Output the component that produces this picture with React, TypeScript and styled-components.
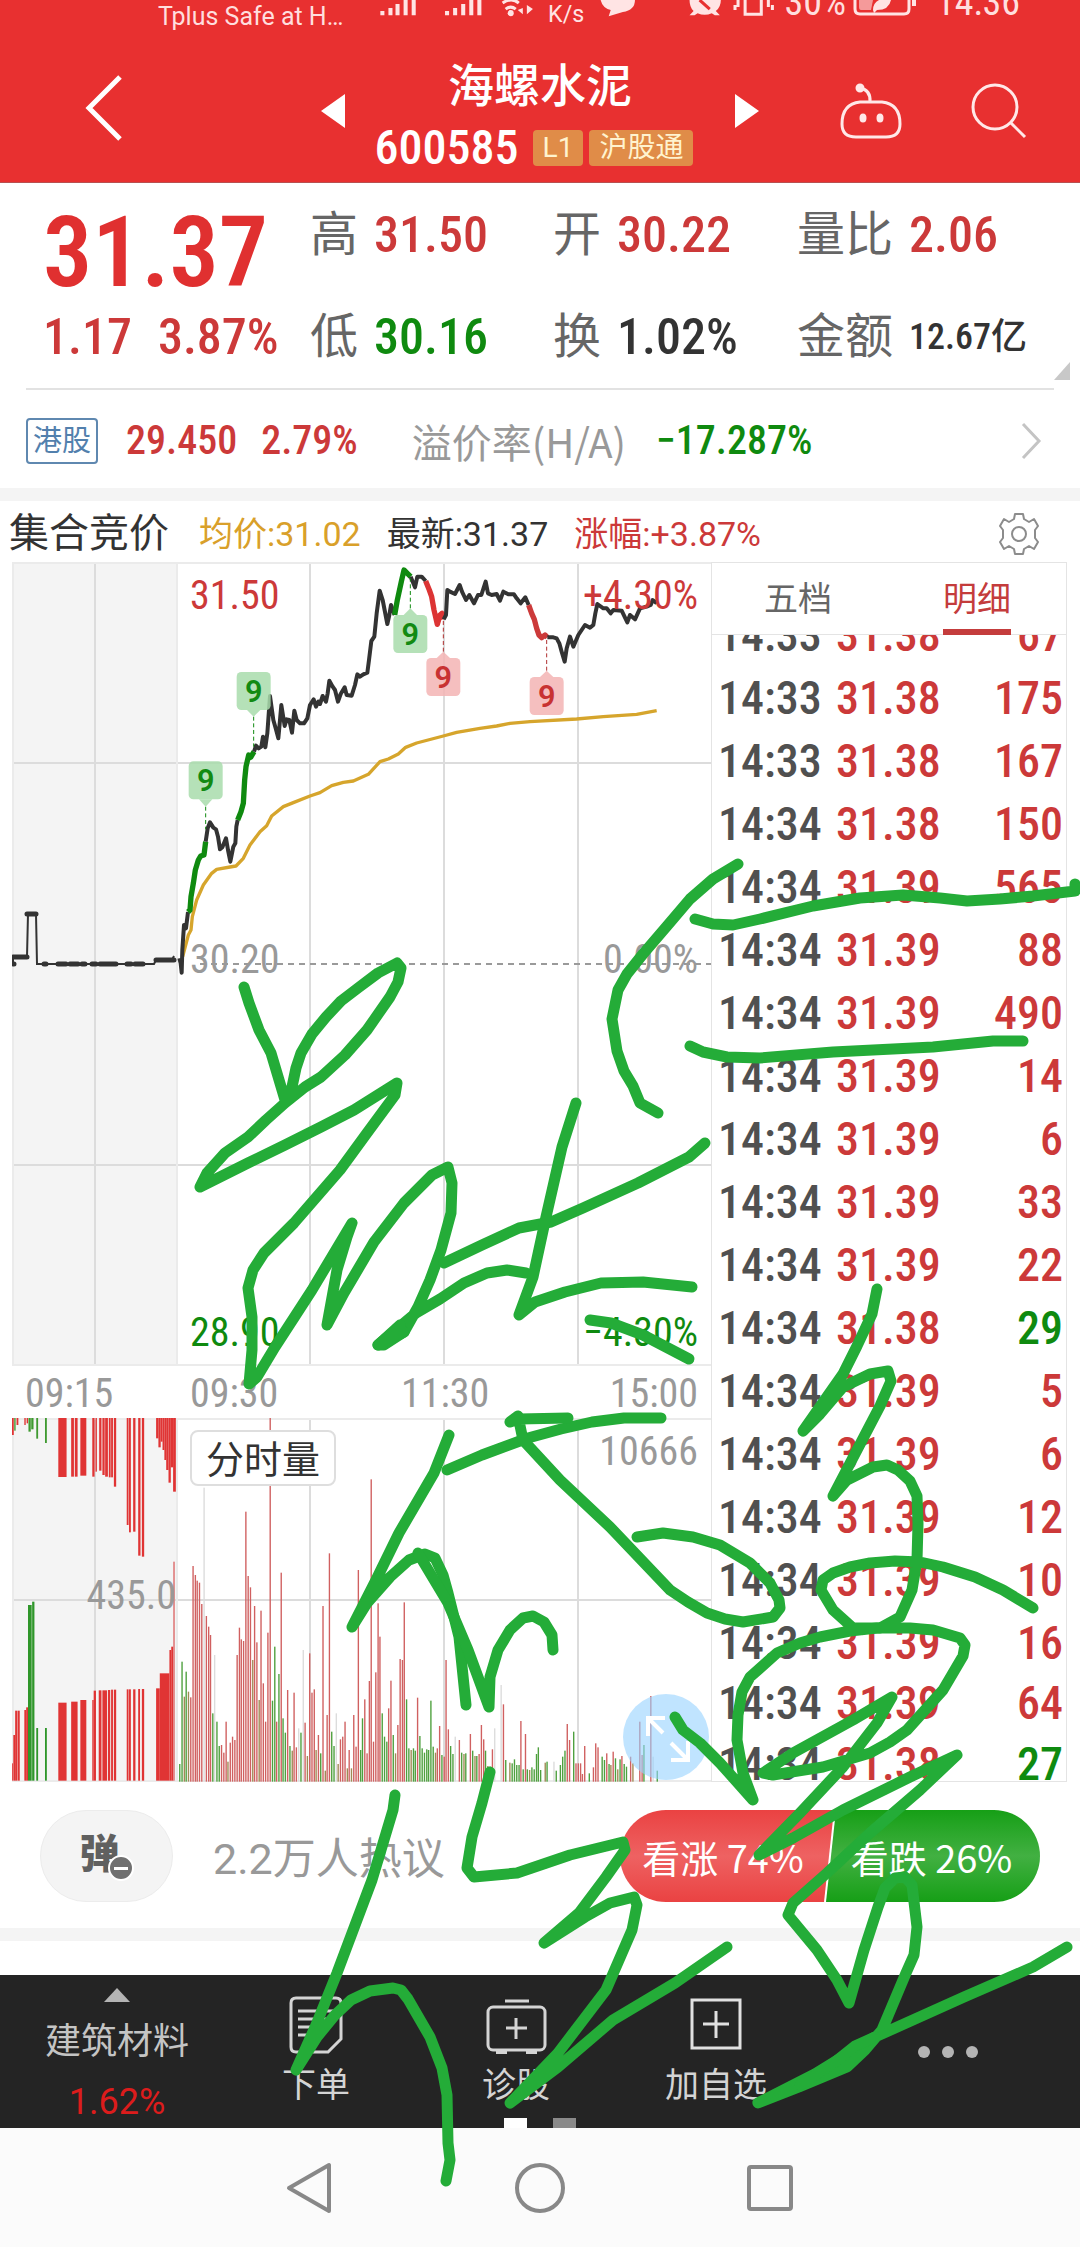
import React from "react";
import styled, { createGlobalStyle } from "styled-components";

const RED = "#cc3939";
const GREEN = "#0f8a0f";
const INK = "#333333";
const MUTED = "#999999";
const LINE = "#dcdcdc";
const NARROW = `"Roboto Condensed", Roboto, "Noto Sans CJK SC", sans-serif`;

const GlobalStyle = createGlobalStyle`
  * { box-sizing: border-box; }
  body {
    margin: 0;
    background: #ffffff;
    font-family: Roboto, "Noto Sans CJK SC", sans-serif;
    color: ${INK};
  }
  button {
    border: 0;
    padding: 0;
    margin: 0;
    background: none;
    font: inherit;
    color: inherit;
    cursor: pointer;
  }
  h1, p, dl, dd, dt { margin: 0; font-weight: 400; }
  svg { display: block; }
`;

const Page = styled.div`
  position: relative;
  width: 100%;
  overflow: hidden;
`;

/* ---------- header ---------- */

const Header = styled.header`
  height: 183px;
  background: #e83030;
  color: #fff;
  border-bottom: 1px solid #b85050;
`;

const StatusBar = styled.div`
  display: flex;
  align-items: flex-start;
  height: 40px;
  padding: 0 60px 0 158px;
  overflow: hidden;
  color: #ffdede;
`;

const Carrier = styled.span`
  width: 188px;
  padding-top: 3px;
  font-size: 25px;
  line-height: 28px;
  white-space: nowrap;
`;

const StatusIcons = styled.svg`
  flex: 1;
  min-width: 0;
  height: 40px;
`;

const StatusText = styled.span`
  margin-top: -18px;
  font-family: ${NARROW};
  font-size: 38px;
  line-height: 40px;
`;

const BatteryIcon = styled.svg`
  width: 84px;
  height: 20px;
  margin-left: 6px;
`;

const TitleBar = styled.div`
  display: grid;
  grid-template-columns: 320px 1fr 320px;
  align-items: center;
  height: 142px;
`;

const IconButton = styled.button`
  display: inline-flex;
  align-items: center;
  justify-content: center;
`;

const BackArea = styled.div`
  padding: 0 0 2px 84px;
`;

const Identity = styled.div`
  display: flex;
  align-items: center;
  justify-content: space-between;
`;

const TitleBlock = styled.div`
  display: flex;
  flex-direction: column;
  align-items: center;
  padding-top: 14px;
`;

const StockName = styled.h1`
  font-size: 46px;
  line-height: 60px;
  font-weight: 500;
`;

const CodeLine = styled.div`
  display: flex;
  align-items: center;
  gap: 6px;
  height: 64px;
  padding-right: 12px;
`;

const Code = styled.span`
  margin-right: 8px;
  font-family: ${NARROW};
  font-size: 48px;
  line-height: 50px;
  font-weight: 500;
`;

const Tag = styled.span`
  padding: 0 10px;
  border-radius: 4px;
  background: #e08c48;
  color: #fff3cf;
  font-size: 28px;
  line-height: 36px;
`;

const Tools = styled.div`
  display: flex;
  justify-content: flex-end;
  gap: 68px;
  padding-right: 52px;
`;

/* ---------- quote ---------- */

const Quote = styled.section`
  position: relative;
  display: grid;
  grid-template-columns: 267px 243px 244px 1fr;
  grid-template-rows: 104px 100px;
  align-items: center;
  height: 207px;
  margin: 0 26px;
  padding-left: 17px;
  border-bottom: 2px solid #e2e2e2;
  font-family: ${NARROW};
`;

const Price = styled.p`
  padding-top: 36px;
  color: #e03030;
  font-size: 98px;
  line-height: 104px;
  font-weight: 600;
`;

const Change = styled.p<{ $color: string }>`
  display: flex;
  gap: 26px;
  color: ${(p) => p.$color};
  font-size: 50px;
  line-height: 54px;
  font-weight: 500;
`;

const Stat = styled.dl`
  display: flex;
  align-items: center;
  gap: 16px;
  white-space: nowrap;
`;

const StatName = styled.dt`
  color: #666;
  font-size: 48px;
  line-height: 60px;
`;

const StatValue = styled.dd<{ $color: string; $small?: boolean }>`
  color: ${(p) => p.$color};
  font-size: ${(p) => (p.$small ? 36 : 50)}px;
  line-height: 54px;
  font-weight: 500;
`;

const Corner = styled.span`
  position: absolute;
  right: -16px;
  bottom: 8px;
  border-left: 16px solid transparent;
  border-bottom: 18px solid #c8c8c8;
`;

const HkRow = styled.section`
  display: flex;
  align-items: center;
  height: 98px;
  padding: 4px 38px 0 26px;
  font-family: ${NARROW};
  font-size: 40px;
  line-height: 44px;
  font-weight: 500;
  color: ${RED};
`;

const HkTag = styled.span`
  margin-right: 28px;
  padding: 0 5px;
  border: 2px solid #5f88b0;
  border-radius: 4px;
  color: #5280ad;
  font-size: 29px;
  font-weight: 400;
  line-height: 42px;
`;

const HkValue = styled.span`
  margin-right: 24px;
`;

const HkName = styled.span`
  margin-left: 30px;
  color: ${MUTED};
  font-family: "Noto Sans CJK SC", sans-serif;
  font-size: 40px;
  font-weight: 400;
`;

const HkPremium = styled.span`
  flex: 1;
  margin-left: 30px;
  color: ${GREEN};
`;

const Band = styled.div`
  height: 13px;
  background: #f4f4f4;
`;

/* ---------- chart ---------- */

const Legend = styled.div`
  display: flex;
  align-items: center;
  height: 61px;
  padding: 4px 38px 0 9px;
  font-size: 34px;
  line-height: 44px;
  white-space: nowrap;
`;

const Session = styled.span`
  margin-right: 30px;
  font-size: 40px;
`;

const LegendItem = styled.span<{ $color: string }>`
  margin-right: 26px;
  color: ${(p) => p.$color};
`;

const LegendEnd = styled.div`
  flex: 1;
  display: flex;
  justify-content: flex-end;
`;

const Board = styled.section`
  display: grid;
  grid-template-columns: 699fr 356fr;
  height: 1220px;
  margin: 0 13px 0 12px;
`;

const Plots = styled.div`
  display: flex;
  flex-direction: column;
`;

const Plot = styled.div<{ $height: number }>`
  position: relative;
  height: ${(p) => p.$height}px;
`;

const PlotSvg = styled.svg`
  width: 100%;
  height: 100%;
`;

const PlotLabel = styled.span<{ $top: number; $color: string; $side: "left" | "right" | "auction" }>`
  position: absolute;
  top: ${(p) => p.$top}px;
  ${(p) => (p.$side === "left" ? "left: 178px;" : p.$side === "right" ? "right: 13px;" : "right: 535px;")}
  color: ${(p) => p.$color};
  font-family: ${NARROW};
  font-size: 40px;
  line-height: 40px;
`;

const TimeAxis = styled.div`
  display: grid;
  grid-template-columns: 178px 211px 1fr auto;
  align-items: center;
  height: 52px;
  padding: 3px 13px 0 0;
  color: ${MUTED};
  font-family: ${NARROW};
  font-size: 40px;
  line-height: 40px;
`;

const AuctionTime = styled.span`
  padding-left: 13px;
`;

const VolumePicker = styled.button`
  position: absolute;
  top: 12px;
  left: 178px;
  height: 56px;
  padding: 4px 14px 0;
  border: 2px solid #dedede;
  border-radius: 8px;
  background: #fff;
  font-size: 38px;
  line-height: 48px;
`;

const ExpandButton = styled.button`
  position: absolute;
  right: 2px;
  bottom: 2px;
  width: 86px;
  height: 86px;
  border-radius: 50%;
  background: rgba(150, 210, 255, 0.6);
`;

const Side = styled.div`
  display: flex;
  flex-direction: column;
  min-height: 0;
  border: 1px solid #e4e4e4;
`;

const Tabs = styled.div`
  display: flex;
  justify-content: space-between;
  height: 72px;
  padding: 0 55px 0 52px;
  border-bottom: 1px solid #e4e4e4;
`;

const Tab = styled.button<{ $active?: boolean }>`
  height: 72px;
  border-bottom: 6px solid ${(p) => (p.$active ? "#c43c3c" : "transparent")};
  color: ${(p) => (p.$active ? "#c43c3c" : "#666")};
  font-size: 34px;
`;

const TradeScroll = styled.div`
  flex: 1;
  min-height: 0;
  overflow: hidden;
`;

const Trades = styled.table`
  width: 100%;
  margin-top: -32px;
  border-collapse: collapse;
  font-family: ${NARROW};
  font-size: 46px;
  line-height: 44px;
  font-weight: 500;
`;

const TradeRow = styled.tr<{ $tight?: boolean }>`
  height: ${(p) => (p.$tight ? 58 : 63)}px;
`;

const TradeTime = styled.td`
  width: 124px;
  padding: 0 0 0 6px;
  color: #505050;
`;

const TradePrice = styled.td`
  padding: 0;
  color: ${RED};
`;

const TradeSize = styled.td<{ $down?: boolean }>`
  padding: 0 3px 0 0;
  text-align: right;
  color: ${(p) => (p.$down ? GREEN : RED)};
`;

/* ---------- opinions ---------- */

const Opinions = styled.section`
  display: flex;
  align-items: center;
  height: 146px;
  padding: 2px 40px 0;
`;

const BulletButton = styled.button`
  position: relative;
  width: 133px;
  height: 92px;
  padding: 0 14px 10px 0;
  border: 1px solid #ececec;
  border-radius: 46px;
  background: #f4f4f4;
  color: #606060;
  font-size: 40px;
  font-weight: 900;
`;

const MinusDot = styled.span`
  position: absolute;
  left: 67px;
  top: 44px;
  display: flex;
  align-items: center;
  justify-content: center;
  width: 26px;
  height: 26px;
  border: 2px solid #fff;
  border-radius: 50%;
  background: #707070;

  &::after {
    content: "";
    width: 14px;
    height: 3px;
    background: #fff;
  }
`;

const Heat = styled.p`
  flex: 1;
  margin-left: 40px;
  padding-top: 6px;
  color: ${MUTED};
  font-size: 43px;
  line-height: 50px;
`;

const Votes = styled.div`
  display: grid;
  grid-template-columns: 1fr 1fr;
  width: 420px;
  height: 92px;
  border-radius: 46px;
  overflow: hidden;
`;

const Vote = styled.button<{ $up?: boolean }>`
  margin-left: ${(p) => (p.$up ? 0 : -7)}px;
  margin-right: ${(p) => (p.$up ? -4 : 0)}px;
  padding-right: ${(p) => (p.$up ? 8 : 0)}px;
  background: ${(p) =>
    p.$up
      ? "linear-gradient(#ea4242, #ee6262 50%, #ea4242)"
      : "linear-gradient(#169f16, #42b042 50%, #169f16)"};
  clip-path: ${(p) =>
    p.$up
      ? "polygon(0 0, 100% 0, calc(100% - 10px) 100%, 0 100%)"
      : "polygon(13px 0, 100% 0, 100% 100%, 3px 100%)"};
  color: #fff;
  font-family: "Noto Sans CJK SC", sans-serif;
  font-size: 38px;
`;

const Spacer = styled.div`
  height: 34px;
`;

/* ---------- bottom bars ---------- */

const ActionBar = styled.nav`
  position: relative;
  display: grid;
  grid-template-columns: 216px 200px 200px 200px 1fr;
  height: 153px;
  background: #242424;
  color: #d4d4d4;
`;

const Action = styled.button`
  display: flex;
  flex-direction: column;
  align-items: center;
  gap: 3px;
  padding-top: 20px;
  font-size: 34px;
  line-height: 50px;
`;

const ActionIcon = styled.svg`
  width: 62px;
  height: 62px;
`;

const Sector = styled.button`
  display: flex;
  flex-direction: column;
  align-items: center;
  padding-top: 13px;
  padding-left: 18px;
  color: #c4c4c4;
  font-size: 36px;
  line-height: 60px;
`;

const UpMark = styled.span`
  margin-bottom: 10px;
  border-left: 13px solid transparent;
  border-right: 13px solid transparent;
  border-bottom: 14px solid #b4b4b4;
`;

const SectorChange = styled.span`
  color: #dc1c1c;
`;

const More = styled.button`
  display: flex;
  align-items: center;
  justify-content: center;
  gap: 12px;
  padding-bottom: 4px;
`;

const Dot = styled.span`
  width: 12px;
  height: 12px;
  border-radius: 50%;
  background: #b4b4b4;
`;

const Pager = styled.div`
  position: absolute;
  left: 0;
  right: 0;
  bottom: 0;
  display: flex;
  justify-content: center;
  gap: 26px;
`;

const PagerMark = styled.span<{ $on?: boolean }>`
  width: 23px;
  height: 10px;
  background: ${(p) => (p.$on ? "#fff" : "#8a8a8a")};
`;

const SystemBar = styled.nav`
  display: flex;
  justify-content: center;
  align-items: center;
  gap: 170px;
  height: 119px;
  background: #fbfbfb;
`;

const Ink = styled.svg`
  position: absolute;
  inset: 0;
  width: 100%;
  height: 100%;
  pointer-events: none;
`;

/* ---------- data ---------- */

type Trade = { time: string; price: string; size: number; down?: boolean; tight?: boolean };

const trades: Trade[] = [
  { time: "14:33", price: "31.38", size: 67 },
  { time: "14:33", price: "31.38", size: 175 },
  { time: "14:33", price: "31.38", size: 167 },
  { time: "14:34", price: "31.38", size: 150 },
  { time: "14:34", price: "31.39", size: 565 },
  { time: "14:34", price: "31.39", size: 88 },
  { time: "14:34", price: "31.39", size: 490 },
  { time: "14:34", price: "31.39", size: 14 },
  { time: "14:34", price: "31.39", size: 6 },
  { time: "14:34", price: "31.39", size: 33 },
  { time: "14:34", price: "31.39", size: 22 },
  { time: "14:34", price: "31.38", size: 29, down: true },
  { time: "14:34", price: "31.39", size: 5 },
  { time: "14:34", price: "31.39", size: 6 },
  { time: "14:34", price: "31.39", size: 12 },
  { time: "14:34", price: "31.39", size: 10 },
  { time: "14:34", price: "31.39", size: 16 },
  { time: "14:34", price: "31.39", size: 64, tight: true },
  { time: "14:34", price: "31.38", size: 27, down: true },
];

const priceRuns: { color: string; points: string }[] = [
  { color: INK, points: "58,1195 62,1210 65,1238 67,1170 72,1095 78,1105 84,1056" },
  { color: GREEN, points: "84,1056 90,1050 93,1010 100,970 106,930 115,900 122,888 132,885 137,845" },
  { color: INK, points: "137,845 143,805 150,787 160,803 168,808 174,830 180,868 187,862 198,835 204,870 211,905 220,860 226,850 229,800 233,780" },
  { color: GREEN, points: "233,780 243,755 250,730 254,660 258,620 266,585 272,592 282,575" },
  { color: INK, points: "282,575 288,557 296,565 304,560 309,530 316,562 322,520 330,408 340,480 347,505 355,535 360,480 364,435 374,498 380,478 388,480 396,518 403,452 410,480 420,490 432,490 442,475 450,435 461,418 468,440 475,425 480,432 488,408 498,425 503,400 508,362 518,380 525,390 534,425 542,402 554,382 560,405 575,407 585,375 592,343 600,350 610,343 622,338 627,300 634,243 643,230 650,160 659,92 668,120 682,192 688,165 693,135 704,165" },
  { color: GREEN, points: "704,165 712,120 724,65 732,30 742,40 752,50" },
  { color: INK, points: "752,50 765,82 772,50 785,50 797,63" },
  { color: "#dc3434", points: "797,63 808,90 815,110 822,150 832,193 840,165 846,160 851,178" },
  { color: INK, points: "851,178 858,165 862,90 870,95 885,102 899,75 906,95 918,120 928,105 942,130 954,105 964,105 977,65 984,100 995,105 1010,102 1020,122 1030,95 1045,103 1062,103 1070,115 1082,130 1096,112 1106,135" },
  { color: "#cc3a3a", points: "1106,135 1115,160 1123,178 1130,205 1137,225 1145,233 1155,225 1162,232" },
  { color: INK, points: "1162,232 1180,232 1190,235 1198,250 1205,275 1214,305 1220,265 1230,230 1240,260 1255,225 1275,195 1290,203 1300,195 1306,160 1312,132 1330,145 1340,145 1352,160 1360,150 1385,152 1402,187 1410,165 1425,178 1440,145 1460,140 1472,135 1478,120 1490,130" },
];

const averageLine =
  "68,1190 85,1125 93,1110 97,1070 110,1020 130,975 155,940 170,928 210,921 228,918 250,895 270,855 300,815 320,797 335,768 370,740 400,728 450,708 480,698 515,677 550,667 580,663 625,643 660,605 685,597 715,582 737,562 770,549 850,528 890,517 960,505 1010,498 1050,490 1110,485 1250,477 1330,470 1430,463 1490,452";

const signals = [
  { x: 137, top: 604, tip: 740, end: 808, up: false, green: true },
  { x: 281, top: 336, tip: 470, end: 560, up: false, green: true },
  { x: 751, top: 165, tip: 145, end: 55, up: true, green: true },
  { x: 850, top: 294, tip: 275, end: 180, up: true, green: false },
  { x: 1160, top: 351, tip: 332, end: 240, up: true, green: false },
];

// Each bar is "x top tone": r rising, g falling, o mixed, w faint.
const volumeBars =
  "391 1212 g;396 905 g;401 1010 o;405 935 g;410 995 o;415 1012 r;420 618 r;425 645 r;429 662 r;434 668 r;439 732 r;444 383 w;449 768 r;454 800 r;458 825 r;463 1060 g;467 885 w;472 1085 g;477 1158 g;482 1155 r;487 1178 r;492 1085 r;496 1205 o;501 1148 r;506 1130 r;511 1140 r;516 885 r;521 803 r;525 838 r;530 843 r;535 455 r;540 648 r;545 682 r;550 900 o;554 738 r;559 847 r;564 1020 o;568 752 r;573 970 r;578 1085 r;583 818 r;588 174 r;593 1022 g;598 860 g;602 1085 r;607 942 g;612 638 r;616 1075 g;621 1118 g;626 990 r;631 1158 g;636 1172 o;640 998 r;645 1162 r;650 1105 w;655 1118 g;660 870 w;664 1088 r;669 1188 o;674 880 r;679 998 r;684 988 r;688 1170 o;693 1125 r;698 1180 g;703 738 r;708 1232 o;712 1065 r;717 580 r;722 1115 g;727 1158 g;732 1060 w;736 1212 o;741 1138 r;746 1130 r;751 1085 r;756 1225 o;760 1170 r;765 1225 o;770 1065 r;775 1160 r;780 630 r;785 1170 g;789 1075 g;794 1018 r;799 1180 r;804 963 r;808 358 r;813 1145 r;818 937 r;823 730 r;827 830 r;832 1060 g;837 1130 g;842 1145 g;846 1045 r;851 962 r;856 1125 g;861 1180 o;866 1095 r;871 897 r;876 900 r;880 727 r;885 1018 g;890 1165 g;895 1170 o;900 1165 g;904 1172 g;909 1013 r;914 1128 g;919 1165 g;924 1178 g;929 1168 g;933 1170 g;938 1022 g;943 1160 g;948 1178 o;952 1165 r;957 1098 r;962 1185 g;967 1190 r;971 900 r;976 1108 r;981 1158 g;986 1182 g;991 1130 w;1000 1140 r;1005 1178 g;1010 1182 o;1014 1180 g;1024 1122 r;1029 1172 g;1034 1188 o;1038 1188 g;1043 1182 r;1048 1095 r;1053 1138 r;1057 1172 g;1062 1218 o;1067 1220 g;1072 1168 r;1077 1105 w;1091 975 w;1096 1033 r;1101 1200 g;1110 1208 o;1115 1210 g;1120 1198 g;1125 1215 g;1130 1215 g;1134 1083 r;1139 1228 g;1144 1122 r;1148 1228 g;1153 1230 o;1158 1222 g;1163 1228 g;1168 1182 g;1172 1162 g;1177 1230 g;1187 1208 o;1191 1205 g;1206 1205 w;1211 1232 g;1220 1215 g;1225 1190 g;1230 1172 g;1235 1092 r;1240 1140 r;1249 1115 g;1254 1210 r;1259 1210 r;1264 1210 r;1268 1242 r;1273 1158 r;1283 1240 g;1292 1222 r;1297 1150 r;1302 1162 r;1311 1190 g;1316 1200 g;1321 1180 r;1326 1212 g;1330 1215 o;1335 1175 r;1340 1195 g;1345 1228 o;1350 1198 g;1354 1188 r;1359 1212 g;1364 1220 g;1373 1190 r;1378 1210 o;1393 1085 r;1398 1185 r;1402 1155 g;1417 1008 r;1422 1190 w;1431 1232 g"
    .split(";")
    .map((entry) => {
      const [x, top, tone] = entry.split(" ");
      return { x: Number(x), top: Number(top), tone };
    });

const tones: Record<string, string> = { r: "#d06060", g: "#4ea03e", o: "#a08a55", w: "#dcdcdc" };

// Auction bars: [x, width, end, green]; the first list hangs, the second stands.
const hanging: [number, number, number, number][] = [
  [26, 5, 225, 0], [31, 4, 212, 1], [36, 5, 195, 0], [53, 4, 195, 0], [58, 4, 190, 0], [62, 6, 215, 1], [68, 6, 208, 1],
  [79, 5, 236, 1], [98, 5, 249, 1], [127, 19, 351, 0], [155, 7, 350, 0], [163, 7, 350, 0], [175, 14, 347, 0], [201, 6, 350, 0],
  [208, 4, 335, 0], [216, 6, 332, 0], [223, 6, 345, 0], [229, 7, 350, 0], [237, 5, 352, 0], [242, 5, 352, 0], [248, 6, 380, 0],
  [276, 5, 495, 0], [281, 5, 517, 0], [290, 6, 515, 0], [301, 6, 587, 0], [309, 6, 590, 0], [340, 6, 235, 0], [345, 6, 262, 0],
  [350, 5, 245, 0], [354, 5, 270, 0], [358, 5, 300, 0], [362, 6, 330, 0], [367, 6, 368, 0], [372, 6, 322, 0], [377, 7, 395, 0],
];

const standing: [number, number, number, number][] = [
  [26, 3, 1210, 0], [29, 5, 1125, 0], [33, 5, 1052, 0], [38, 6, 1052, 0], [53, 5, 1050, 0], [57, 5, 1042, 0], [61, 9, 735, 1],
  [70, 6, 725, 1], [79, 5, 1104, 1], [98, 5, 1104, 1], [127, 19, 1028, 0], [155, 15, 1025, 0], [175, 14, 1020, 0], [201, 4, 1020, 0],
  [204, 6, 992, 0], [215, 7, 991, 0], [223, 11, 991, 0], [235, 6, 990, 0], [242, 5, 989, 0], [248, 6, 989, 0], [276, 5, 988, 0],
  [281, 5, 988, 0], [290, 6, 988, 0], [301, 5, 987, 0], [309, 6, 987, 0], [340, 9, 985, 0], [348, 22, 940, 0], [369, 5, 870, 0],
  [373, 6, 860, 0],
];

const strokes = [
  "244,987 249,1003 259,1030 271,1053 285,1100 292,1087 296,1068 301,1053 312,1034 326,1017 341,1001 358,988 378,973 397,963 401,968 398,982 390,997 367,1030 345,1055 321,1077 305,1087 285,1103 266,1120 248,1137 225,1153 207,1173 200,1187 248,1163 285,1145 321,1127 354,1110 397,1083 395,1095 367,1133 340,1170 294,1223 264,1253 253,1270 248,1288 252,1317 252,1350 249,1384 257,1377 275,1347 312,1290 352,1223 347,1237 337,1270 327,1325 344,1293 374,1242 404,1203 432,1175 448,1167 452,1183 451,1213 441,1250 430,1280 418,1307 404,1332 378,1345 416,1313 440,1299 464,1283 487,1273 507,1270 526,1273",
  "400,1325 378,1345 384,1345 404,1332",
  "444,1263 482,1245 519,1228 551,1222 583,1208 638,1183 689,1157 705,1143",
  "576,1103 562,1147 546,1217 533,1277 519,1315 535,1302 565,1292 601,1283 643,1282 692,1287",
  "590,1320 611,1323 643,1335 689,1359",
  "738,864 713,879 690,899 667,926 643,954 627,974 618,990 612,1019 617,1051 624,1071 633,1086 640,1103 658,1113",
  "695,919 713,924 733,925 760,919 813,906 860,898 903,895 940,898 967,901 1000,899 1033,896 1075,891 1075,884",
  "690,1046 703,1052 727,1057 760,1058 833,1052 933,1047 993,1041 1023,1041",
  "877,1289 872,1314 857,1346 843,1374 803,1431 820,1414 843,1387 870,1374 888,1371 891,1381 880,1406 833,1496 847,1480 873,1467 887,1465 898,1470 910,1481 917,1496 918,1524 917,1560 912,1590 900,1617 880,1628 853,1628 833,1610 821,1590 823,1580 833,1573 850,1567 870,1563 895,1561 920,1562 943,1567 975,1577 1003,1590 1033,1608",
  "449,1435 434,1473 399,1533 376,1580 352,1627 367,1603 390,1577 409,1560 425,1554 435,1558 443,1575 448,1593 459,1637 466,1705",
  "418,1553 430,1573 448,1603 468,1650 489,1707 490,1677 498,1650 510,1630 523,1618 533,1616 544,1622 552,1635 553,1650",
  "447,1470 482,1455 528,1438 561,1429 592,1422 624,1418 661,1418",
  "568,1418 519,1419 510,1422 518,1416 523,1440 560,1480 610,1527 670,1590 688,1602 707,1613 725,1619 743,1622 773,1617 780,1608 779,1600 770,1583 750,1563 720,1545 693,1537 663,1533 637,1537",
  "675,1717 683,1730 700,1743 720,1763 753,1800 743,1773 737,1740 738,1715 742,1692 750,1677 777,1653 800,1643 820,1637 850,1631 877,1628 910,1628 933,1630 960,1638 965,1645 963,1656 943,1690 907,1730 890,1742 870,1753 823,1767 773,1775 763,1773 793,1753 853,1720 892,1697 877,1723 843,1767 800,1813 759,1855 793,1838 843,1810 910,1777 957,1755 920,1790 870,1833 827,1873 793,1903 788,1915 817,1950 837,1980 849,2003 864,1950 878,1907 885,1888 895,1878 905,1877 912,1885 917,1927 914,1955 906,1973 882,2030 865,2050 847,2067 799,2087 758,2103 815,2074 875,2037 964,1997 1033,1967 1067,1947",
  "875,2037 855,2046 835,2062 800,2085",
  "395,1795 393,1810 372,1880 337,1973 316,2025 296,2070 317,2037 335,2015 351,2000 370,1991 393,1988 401,1990 408,1999 430,2037 442,2068 447,2095 448,2143 450,2160 446,2181",
  "490,1772 482,1803 472,1837 467,1868 474,1877 517,1873 570,1855 623,1842 625,1850 606,1877 579,1913 544,1943 585,1917 610,1903 634,1897 637,1905 632,1930 606,1990 558,2053 510,2103 558,2067 613,2020 675,1983 727,1947",
];

/* ---------- parts ---------- */

const PriceChart = () => (
  <Plot $height={804}>
    <PlotSvg viewBox="12 562 699 804" preserveAspectRatio="none" role="img" aria-label="分时走势">
      <rect x={12} y={562} width={165} height={804} fill="#f4f4f4" />
      <g stroke={LINE} strokeWidth={2}>
        <path d="M95 562V1366M310 562V1366M444 562V1366M578 562V1366M12 763H711M12 1165H711" />
        <path d="M12 563H711M13 562V1366M12 1365H711M177 562V1366" stroke="#ebebeb" />
        <path d="M200 964H711" stroke="#9a9a9a" strokeDasharray="6 5" />
      </g>
      <g transform="translate(160 560) scale(0.333333)" fill="none" strokeLinejoin="round">
        <polyline points={averageLine} stroke="#d6a52c" strokeWidth={10} />
        {priceRuns.map((run) => (
          <polyline key={run.points} points={run.points} stroke={run.color} strokeWidth={run.color === INK ? 12 : 16} />
        ))}
        {signals.map((s) => {
          const base = s.up ? s.top : s.top + 114;
          return (
            <g key={s.x}>
              <path d={`M${s.x} ${s.tip}V${s.end}`} stroke={s.green ? GREEN : "#b03030"} strokeWidth={3} strokeDasharray="12 8" />
              <g fill={s.green ? "#a8dcac" : "#f3b4b4"} fillOpacity={0.85}>
                <rect x={s.x - 51} y={s.top} width={102} height={114} rx={14} />
                <path d={`M${s.x - 20} ${base}L${s.x} ${s.tip}L${s.x + 20} ${base}Z`} />
              </g>
              <text x={s.x} y={s.top + 90} textAnchor="middle" fontSize={92} fontWeight={600} fill={s.green ? "#128a12" : "#c83232"}>
                9
              </text>
            </g>
          );
        })}
      </g>
      <g fill="none" stroke={INK} strokeWidth={2}>
        <path d="M13 964V957H27L28 914H36L37 964H154L156 960H172L174 956" />
        <path d="M13 957H27M27 914H36M156 960H174" strokeWidth={5} strokeLinecap="round" />
        <path d="M13 964H14M44 964H46M58 964H66M70 964H78M82 964H85M92 964H96M100 964H116M127 964H131M135 964H143" strokeWidth={5} strokeLinecap="round" />
      </g>
    </PlotSvg>
    <PlotLabel $side="left" $top={14} $color={RED}>31.50</PlotLabel>
    <PlotLabel $side="right" $top={14} $color={RED}>+4.30%</PlotLabel>
    <PlotLabel $side="left" $top={378} $color={MUTED}>30.20</PlotLabel>
    <PlotLabel $side="right" $top={378} $color={MUTED}>0.00%</PlotLabel>
    <PlotLabel $side="left" $top={751} $color={GREEN}>28.90</PlotLabel>
    <PlotLabel $side="right" $top={751} $color={GREEN}>−4.30%</PlotLabel>
  </Plot>
);

const VolumeChart = () => (
  <Plot $height={364}>
    <PlotSvg viewBox="12 1418 699 364" preserveAspectRatio="none" role="img" aria-label="分时量">
      <rect x={12} y={1418} width={165} height={364} fill="#f4f4f4" />
      <g stroke={LINE} strokeWidth={2}>
        <path d="M95 1418V1782M310 1418V1782M444 1418V1782M578 1418V1782M12 1600H711" />
        <path d="M12 1419H711M13 1418V1782M12 1781H711M177 1418V1782" stroke="#ebebeb" />
      </g>
      <g transform="translate(0 1360) scale(0.45914 0.333333)">
        {hanging.map(([x, w, end, green]) => (
          <rect key={x} x={x} y={174} width={w - 1} height={end - 174} fill={green ? "#3f9a30" : "#e03434"} />
        ))}
        {standing.map(([x, w, top, green]) => (
          <rect key={x} x={x} y={top} width={w - 1} height={1262 - top} fill={green ? "#2f962a" : "#e03434"} />
        ))}
        <rect x={377} y={605} width={4} height={657} fill="#e28a8a" />
        {volumeBars.map((bar) => (
          <rect key={bar.x} x={bar.x - 1} y={bar.top} width={3} height={1265 - bar.top} fill={tones[bar.tone]} />
        ))}
      </g>
    </PlotSvg>
    <VolumePicker type="button">分时量</VolumePicker>
    <PlotLabel $side="right" $top={14} $color={MUTED}>10666</PlotLabel>
    <PlotLabel $side="auction" $top={158} $color={MUTED}>435.0</PlotLabel>
    <ExpandButton type="button" aria-label="全屏">
      <svg width="86" height="86" viewBox="0 0 86 86" fill="none" stroke="#fff" strokeWidth="4">
        <path d="M25 42V24H42M26 25L40 39" />
        <path d="M48 66H65V47M48 49L64 65" />
      </svg>
    </ExpandButton>
  </Plot>
);

const stats: { name: string; value: string; color: string; small?: boolean }[][] = [
  [
    { name: "高", value: "31.50", color: RED },
    { name: "开", value: "30.22", color: RED },
    { name: "量比", value: "2.06", color: RED },
  ],
  [
    { name: "低", value: "30.16", color: GREEN },
    { name: "换", value: "1.02%", color: INK },
    { name: "金额", value: "12.67亿", color: INK, small: true },
  ],
];

const StatCells = ({ row }: { row: number }) => (
  <>
    {stats[row].map((s) => (
      <Stat key={s.name}>
        <StatName>{s.name}</StatName>
        <StatValue $color={s.color} $small={s.small}>{s.value}</StatValue>
      </Stat>
    ))}
  </>
);

export default function App() {
  return (
    <Page>
      <GlobalStyle />
      <Header>
        <StatusBar>
          <Carrier>Tplus Safe at H…</Carrier>
          <StatusIcons viewBox="346 0 434 40" preserveAspectRatio="xMinYMin slice" fill="#ffe4e4" aria-hidden="true">
            <path d="M380 11h4v4h-4zM388 8h4v7h-4zM395 4h4v11h-4zM403 0h4v15h-4zM411 0h4v15h-4z" />
            <path d="M444 11h4v4h-4zM452 8h4v7h-4zM460 4h4v11h-4zM468 0h4v15h-4zM476 0h4v15h-4z" />
            <path d="M501 3q9-6 16 0M504 9q5-4 10 0" fill="none" stroke="#ffe4e4" strokeWidth="3" />
            <circle cx="509" cy="13" r="3" />
            <path d="M521 8v6l-5-4zM525 5v9l6-5z" />
            <text x="546" y="22" fontSize="23">K/s</text>
            <path d="M598 0h34q0 10-12 12l-14 4 2-6q-8-2-10-10z" />
            <path d="M686 0h31q0 7-5 11l4 4h-5l-3-2q-7 3-14 0l-3 2h-5l4-4q-4-4-4-11z" />
            <path d="M696 0l10 9" stroke="#e83030" strokeWidth="3" />
            <path d="M741 0v14h16V0M734 0v7M731 5v5M764 0v7M768 5v5" fill="none" stroke="#ffe4e4" strokeWidth="3" />
          </StatusIcons>
          <StatusText>30%</StatusText>
          <BatteryIcon viewBox="0 0 84 20" aria-hidden="true">
            <path d="M3 0v9q0 5 5 5h44q5 0 5-5V0" fill="none" stroke="#ffe4e4" strokeWidth="3" />
            <path d="M7 0h14l-2 10H9q-2 0-2-3z" fill="#f59a9a" />
            <path d="M21 10q0-7 6-10h12q-2 10-14 10l-3 3z" fill="#ffe4e4" />
            <path d="M62 0v6" stroke="#ffe4e4" strokeWidth="4" />
          </BatteryIcon>
          <StatusText>14:36</StatusText>
        </StatusBar>
        <TitleBar>
          <BackArea>
            <IconButton type="button" aria-label="返回">
              <svg width="40" height="66" viewBox="0 0 40 66" fill="none" stroke="#fff" strokeWidth="5">
                <path d="M36 2L5 33L36 64" />
              </svg>
            </IconButton>
          </BackArea>
          <Identity>
            <IconButton type="button" aria-label="上一只">
              <svg width="26" height="36" viewBox="0 0 26 36" fill="#fff"><path d="M25 1V35L1 18Z" /></svg>
            </IconButton>
            <TitleBlock>
              <StockName>海螺水泥</StockName>
              <CodeLine>
                <Code>600585</Code>
                <Tag>L1</Tag>
                <Tag>沪股通</Tag>
              </CodeLine>
            </TitleBlock>
            <IconButton type="button" aria-label="下一只">
              <svg width="26" height="36" viewBox="0 0 26 36" fill="#fff"><path d="M1 1V35L25 18Z" /></svg>
            </IconButton>
          </Identity>
          <Tools>
            <IconButton type="button" aria-label="智能助手">
              <svg width="62" height="58" viewBox="0 0 62 58" fill="none" stroke="#ffe8e8" strokeWidth="3">
                <path d="M20 6Q31 8 30 20" />
                <circle cx="20" cy="6" r="3" fill="#ffe8e8" />
                <path d="M20 20H42Q60 22 60 42Q60 55 46 55H16Q2 55 2 42Q2 22 20 20Z" />
                <ellipse cx="23" cy="36" rx="2" ry="3" fill="#ffe8e8" />
                <ellipse cx="40" cy="36" rx="2" ry="3" fill="#ffe8e8" />
              </svg>
            </IconButton>
            <IconButton type="button" aria-label="搜索">
              <svg width="58" height="58" viewBox="0 0 58 58" fill="none" stroke="#ffe8e8" strokeWidth="3">
                <circle cx="25" cy="25" r="22" />
                <path d="M41 41L55 55" />
              </svg>
            </IconButton>
          </Tools>
        </TitleBar>
      </Header>

      <Quote>
        <Price>31.37</Price>
        <StatCells row={0} />
        <Change $color={RED}>
          <span>1.17</span>
          <span>3.87%</span>
        </Change>
        <StatCells row={1} />
        <Corner />
      </Quote>

      <HkRow>
        <HkTag>港股</HkTag>
        <HkValue>29.450</HkValue>
        <HkValue>2.79%</HkValue>
        <HkName>溢价率(H/A)</HkName>
        <HkPremium>−17.287%</HkPremium>
        <IconButton type="button" aria-label="港股详情">
          <svg width="22" height="38" viewBox="0 0 22 38" fill="none" stroke="#c4c4c4" strokeWidth="3">
            <path d="M3 2L19 19L3 36" />
          </svg>
        </IconButton>
      </HkRow>
      <Band />

      <Legend>
        <Session>集合竞价</Session>
        <LegendItem $color="#d9a02a">均价:31.02</LegendItem>
        <LegendItem $color={INK}>最新:31.37</LegendItem>
        <LegendItem $color={RED}>涨幅:+3.87%</LegendItem>
        <LegendEnd>
          <IconButton type="button" aria-label="设置">
            <svg width="46" height="46" viewBox="0 0 46 46" fill="none" stroke="#8c8c8c" strokeWidth="2" strokeLinejoin="round">
              <path d="M19 3H27L28 8L33 11L38 8L42 15L39 19V27L42 31L38 38L33 35L28 38L27 43H19L18 38L13 35L8 38L4 31L7 27V19L4 15L8 8L13 11L18 8Z" />
              <circle cx="23" cy="23" r="7" />
            </svg>
          </IconButton>
        </LegendEnd>
      </Legend>

      <Board>
        <Plots>
          <PriceChart />
          <TimeAxis>
            <AuctionTime>09:15</AuctionTime>
            <span>09:30</span>
            <span>11:30</span>
            <span>15:00</span>
          </TimeAxis>
          <VolumeChart />
        </Plots>
        <Side>
          <Tabs role="tablist">
            <Tab type="button" role="tab" aria-selected={false}>五档</Tab>
            <Tab type="button" role="tab" aria-selected $active>明细</Tab>
          </Tabs>
          <TradeScroll>
            <Trades>
              <tbody>
                {trades.map((t, i) => (
                  <TradeRow key={i} $tight={t.tight}>
                    <TradeTime>{t.time}</TradeTime>
                    <TradePrice>{t.price}</TradePrice>
                    <TradeSize $down={t.down}>{t.size}</TradeSize>
                  </TradeRow>
                ))}
              </tbody>
            </Trades>
          </TradeScroll>
        </Side>
      </Board>

      <Opinions>
        <BulletButton type="button">
          弹
          <MinusDot />
        </BulletButton>
        <Heat>2.2万人热议</Heat>
        <Votes>
          <Vote type="button" $up>看涨 74%</Vote>
          <Vote type="button">看跌 26%</Vote>
        </Votes>
      </Opinions>
      <Band />
      <Spacer />

      <ActionBar>
        <Sector type="button">
          <UpMark />
          <span>建筑材料</span>
          <SectorChange>1.62%</SectorChange>
        </Sector>
        <Action type="button">
          <ActionIcon viewBox="0 0 62 62" fill="none" stroke="#d4d4d4" strokeWidth="3">
            <path d="M11 3H51Q56 3 56 8V44L43 57H11Q6 57 6 52V8Q6 3 11 3Z" />
            <path d="M13 16H49M13 24H49M13 32H43M13 40H37" />
          </ActionIcon>
          下单
        </Action>
        <Action type="button">
          <ActionIcon viewBox="0 0 62 62" fill="none" stroke="#d4d4d4" strokeWidth="3">
            <path d="M20 6H44" />
            <rect x="3" y="12" width="57" height="43" rx="5" />
            <path d="M31 23V44M21 33H42" />
            <path d="M11 57H22M41 57H52" strokeWidth="4" />
          </ActionIcon>
          诊股
        </Action>
        <Action type="button">
          <ActionIcon viewBox="0 0 62 62" fill="none" stroke="#e0e0e0" strokeWidth="3">
            <rect x="7" y="5" width="48" height="48" />
            <path d="M31 16V43M18 29H44" />
          </ActionIcon>
          加自选
        </Action>
        <More type="button" aria-label="更多">
          <Dot />
          <Dot />
          <Dot />
        </More>
        <Pager>
          <PagerMark $on />
          <PagerMark />
        </Pager>
      </ActionBar>

      <SystemBar>
        <IconButton type="button" aria-label="系统返回">
          <svg width="60" height="60" viewBox="0 0 60 60" fill="none" stroke="#888" strokeWidth="4" strokeLinejoin="round">
            <path d="M49 7V53L9 30Z" />
          </svg>
        </IconButton>
        <IconButton type="button" aria-label="主屏幕">
          <svg width="60" height="60" viewBox="0 0 60 60" fill="none" stroke="#888" strokeWidth="4">
            <circle cx="30" cy="30" r="23" />
          </svg>
        </IconButton>
        <IconButton type="button" aria-label="最近任务">
          <svg width="60" height="60" viewBox="0 0 60 60" fill="none" stroke="#888" strokeWidth="4">
            <rect x="9" y="9" width="42" height="42" rx="2" />
          </svg>
        </IconButton>
      </SystemBar>

      <Ink viewBox="0 0 1080 2247" preserveAspectRatio="none" aria-hidden="true">
        <g fill="none" stroke="#24ac38" strokeWidth="11" strokeLinecap="round" strokeLinejoin="round">
          {strokes.map((points) => (
            <polyline key={points} points={points} />
          ))}
        </g>
      </Ink>
    </Page>
  );
}
